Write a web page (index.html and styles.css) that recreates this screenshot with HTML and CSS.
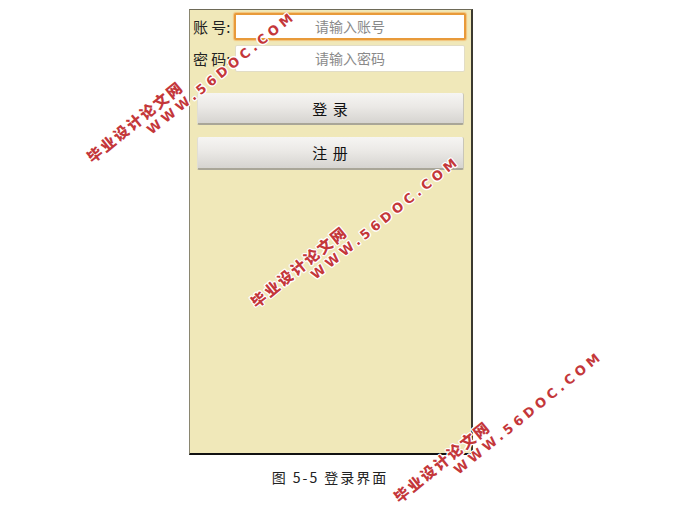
FILE: index.html
```html
<!DOCTYPE html>
<html>
<head>
<meta charset="utf-8">
<link rel="stylesheet" href="styles.css">
</head>
<body>
<div class="page">
  <div class="phone">
    <div class="row">
      <span class="label">账 号:</span>
      <div class="input focus">请输入账号</div>
    </div>
    <div class="row row2">
      <span class="label">密 码:</span>
      <div class="input plain">请输入密码</div>
    </div>
    <div class="btn btn1">登 录</div>
    <div class="btn btn2">注 册</div>
  </div>
  <div class="caption">图 5-5 登录界面</div>
</div>
<div class="wm wm1"><div class="cn">毕业设计论文网</div><div class="en">WWW.56DOC.COM</div></div>
<div class="wm wm2"><div class="cn">毕业设计论文网</div><div class="en">WWW.56DOC.COM</div></div>
<div class="wm wm3"><div class="cn">毕业设计论文网</div><div class="en">WWW.56DOC.COM</div></div>
</body>
</html>
```
FILE: styles.css
```css
html, body {
  margin: 0;
  padding: 0;
  background: #ffffff;
  overflow: hidden;
}
body {
  width: 691px;
  height: 505px;
  position: relative;
  font-family: "Noto Sans CJK SC", "Noto Sans", sans-serif;
}
.page {
  width: 284px;
  margin: 9px 0 0 189px;
}
.phone {
  box-sizing: border-box;
  width: 284px;
  height: 446px;
  background: #f0e8b9;
  border-left: 1px solid #8a8670;
  border-top: 1px solid #6e6a58;
  border-right: 2px solid #3c3a30;
  border-bottom: 2px solid #111111;
  padding: 3px 5px 0 3px;
  display: flex;
  flex-direction: column;
}
.row {
  display: flex;
  align-items: center;
  height: 27px;
}
.row2 {
  margin-top: 5px;
}
.label {
  width: 41px;
  font-size: 15px;
  line-height: 27px;
  color: #222;
  white-space: nowrap;
}
.input {
  box-sizing: border-box;
  flex: 1;
  height: 27px;
  background: #ffffff;
  font-size: 14px;
  line-height: 23px;
  color: #8a8a8a;
  text-align: center;
  border-radius: 2px;
}
.focus {
  border: 2px solid #e89a3a;
  box-shadow: 0 0 1px 1px #f3c47a;
}
.plain {
  border: 1px solid #e2ddc6;
  margin: 0 1px;
  line-height: 25px;
}
.btn {
  box-sizing: border-box;
  margin: 0 2px 0 4px;
  height: 32px;
  background: linear-gradient(#f6f5f3, #ebe9e6 45%, #d6d4d0);
  border-bottom: 2px solid #a9a698;
  border-right: 1px solid #c9c6b8;
  border-left: 1px solid #e0ded5;
  border-radius: 2px;
  font-size: 15px;
  line-height: 31px;
  text-align: center;
  color: #111;
  letter-spacing: 1px;
}
.btn1 {
  margin-top: 21px;
}
.btn2 {
  margin-top: 12px;
  height: 33px;
}
.caption {
  margin-top: 12px;
  text-align: center;
  font-size: 14px;
  line-height: 20px;
  color: #222;
  letter-spacing: 2px;
  padding-right: 2px;
}
.wm {
  position: absolute;
  transform-origin: 0 0;
  transform: rotate(-39deg);
  color: #c4373a;
  font-weight: bold;
  white-space: nowrap;
  text-shadow: 1px 0 0 #fff, -1px 0 0 #fff, 0 1px 0 #fff, 0 -1px 0 #fff, 1px 1px 0 #fff, -1px -1px 0 #fff, 1px -1px 0 #fff, -1px 1px 0 #fff;
}
.wm .cn {
  font-family: "Noto Sans CJK SC", sans-serif;
  font-weight: 900;
  font-size: 15px;
  letter-spacing: 2px;
  line-height: 17px;
}
.wm .en {
  font-family: "DejaVu Sans", sans-serif;
  font-size: 13px;
  letter-spacing: 4px;
  line-height: 17px;
  margin-left: 64px;
}
.wm1 { left: 83px; top: 152px; }
.wm2 { left: 247px; top: 297px; }
.wm3 { left: 390px; top: 492px; }
```
